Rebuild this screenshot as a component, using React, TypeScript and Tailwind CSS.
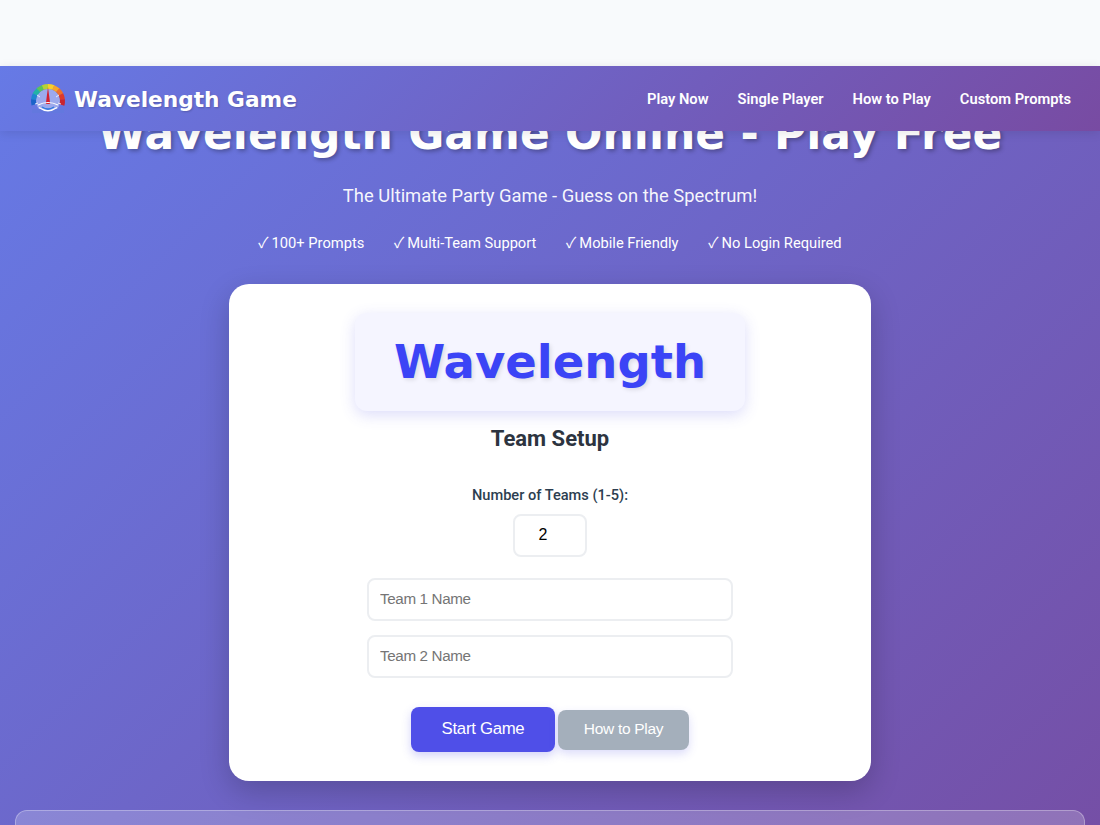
const headingFont = "font-['DejaVu_Sans',sans-serif]";
const arcColors = ["#1a63c9", "#1f86cf", "#22b3a6", "#5cc35a", "#b7d135", "#f7cf2c", "#f7a52b", "#ee6f2d", "#dd3a2c", "#c9242f"];

function GaugeLogo() {
  const cx = 18;
  const cy = 18;
  const r = 14.5;
  const start = 195;
  const step = 210 / arcColors.length;
  return (
    <svg width="36" height="30" viewBox="0 0 36 30" className="shrink-0 -translate-y-[2px]">
      <circle cx={cx} cy={cy} r="12" fill="#c9d3f5" fillOpacity="0.55" />
      <path d="M2 26 H34 V30 H2 Z" fill="#6378de" />
      <g fill="none" strokeWidth="5">
        {arcColors.map((color, i) => {
          const a = ((start - i * step) * Math.PI) / 180;
          const b = ((start - (i + 1) * step - 1) * Math.PI) / 180;
          const d = `M${cx + r * Math.cos(a)} ${cy - r * Math.sin(a)} A${r} ${r} 0 0 1 ${cx + r * Math.cos(b)} ${cy - r * Math.sin(b)}`;
          return <path key={color} d={d} stroke={color} />;
        })}
      </g>
      <g stroke="#ffffff" strokeWidth="1" strokeOpacity="0.8">
        <path d="M7 12 L10 14" />
        <path d="M29 12 L26 14" />
        <path d="M5 21 L8 20" />
        <path d="M31 21 L28 20" />
      </g>
      <path d="M18 4 L20.2 21 L15.8 21 Z" fill="#d3202f" />
      <path d="M8 22 Q18 17 28 22" fill="none" stroke="#ffffff" strokeWidth="1.2" />
      <path d="M9 24.5 Q18 31 27 24.5" fill="none" stroke="#ffffff" strokeWidth="1.3" />
      <path d="M12 24 Q18 28 24 24" fill="none" stroke="#2f7be0" strokeWidth="1.5" />
    </svg>
  );
}

function Feature({ label }: { label: string }) {
  return (
    <span className="flex items-center gap-[3px]">
      <span className="-translate-y-[1px] font-['Noto_Sans_CJK_JP',sans-serif] text-[15px]">✓</span>
      {label}
    </span>
  );
}

export default function App() {
  return (
    <div className="h-[825px] overflow-hidden bg-[#f8fafc] font-['Roboto',sans-serif]">
      <div className="h-[66px]" />
      <div className="h-[759px] bg-[linear-gradient(135deg,#667ae6_0%,#754fa6_100%)] text-white">
        <header className="relative z-10 flex h-[65px] items-center justify-between bg-[linear-gradient(135deg,#667ae6_0%,#784ba2_100%)] pt-[2px] pl-[30px] pr-[29px] shadow-[0_2px_10px_rgba(0,0,0,0.1)]">
          <div className="flex items-center gap-[8px]">
            <GaugeLogo />
            <span className={`${headingFont} text-[21.7px] leading-none font-bold [text-shadow:1px_1px_2px_rgba(0,0,0,0.2)]`}>
              Wavelength Game
            </span>
          </div>
          <nav className="flex gap-[29px] text-[14.7px] font-semibold">
            <span>Play Now</span>
            <span>Single Player</span>
            <span>How to Play</span>
            <span>Custom Prompts</span>
          </nav>
        </header>

        <h1 className={`${headingFont} -mt-[24px] text-center text-[44px] leading-[54px] font-bold [text-shadow:2px_2px_4px_rgba(0,0,0,0.3)]`}>
          Wavelength Game Online - Play Free
        </h1>
        <p className="mt-[23px] text-center text-[18.4px] leading-[24px] text-white/95">
          The Ultimate Party Game - Guess on the Spectrum!
        </p>
        <div className="mt-[25px] flex justify-center gap-[29.7px] text-[14.7px] leading-[20px]">
          <Feature label="100+ Prompts" />
          <Feature label="Multi-Team Support" />
          <Feature label="Mobile Friendly" />
          <Feature label="No Login Required" />
        </div>

        <main className="mx-auto mt-[31px] flex h-[497px] w-[642px] flex-col items-center rounded-[20px] bg-white pt-[29px] shadow-[0_10px_30px_rgba(0,0,0,0.2)]">
          <div className="flex h-[98px] w-[390px] items-center justify-center rounded-[12px] bg-[#f5f5ff] shadow-[0_4px_15px_rgba(79,79,232,0.2)]">
            <span className={`${headingFont} text-[46.5px] leading-none font-bold text-[#3b44f6] [text-shadow:2px_2px_4px_rgba(0,0,0,0.1)]`}>
              Wavelength
            </span>
          </div>
          <h2 className="mt-[14px] text-[22px] leading-[28px] font-bold text-[#2d3440]">Team Setup</h2>
          <label className="mt-[32px] text-[14.6px] leading-[20px] font-medium text-[#2c3e50]">Number of Teams (1-5):</label>
          <input
            type="number"
            defaultValue={2}
            className="mt-[9px] h-[43px] w-[74px] rounded-[8px] border-2 border-[#eceef1] pb-[2px] pl-[1px] text-center font-['Liberation_Sans',sans-serif] text-[16px] text-black"
          />
          <input
            placeholder="Team 1 Name"
            className="mt-[21px] h-[43px] w-[366px] rounded-[8px] border-2 border-[#eceef1] px-[11px] pb-[2px] font-['Liberation_Sans',sans-serif] text-[15.2px] tracking-[-0.35px] text-black placeholder:text-[#757575]"
          />
          <input
            placeholder="Team 2 Name"
            className="mt-[14px] h-[43px] w-[366px] rounded-[8px] border-2 border-[#eceef1] px-[11px] pb-[2px] font-['Liberation_Sans',sans-serif] text-[15.2px] tracking-[-0.35px] text-black placeholder:text-[#757575]"
          />
          <div className="mt-[29px] flex items-center gap-[3px] font-['Liberation_Sans',sans-serif]">
            <button className="h-[45px] w-[144px] rounded-[8px] bg-[#4f4fe8] pb-[2px] text-[16.8px] tracking-[-0.3px] text-white shadow-[0_4px_10px_rgba(79,79,232,0.25)]">
              Start Game
            </button>
            <button className="h-[40px] w-[131px] rounded-[8px] bg-[#a4afbb] pb-[2px] text-[15.5px] tracking-[-0.3px] text-white shadow-[0_4px_10px_rgba(79,79,232,0.2)]">
              How to Play
            </button>
          </div>
        </main>

        <div className="mx-[15px] mt-[29px] h-[60px] rounded-[12px] border border-white/30 bg-white/20" />
      </div>
    </div>
  );
}
